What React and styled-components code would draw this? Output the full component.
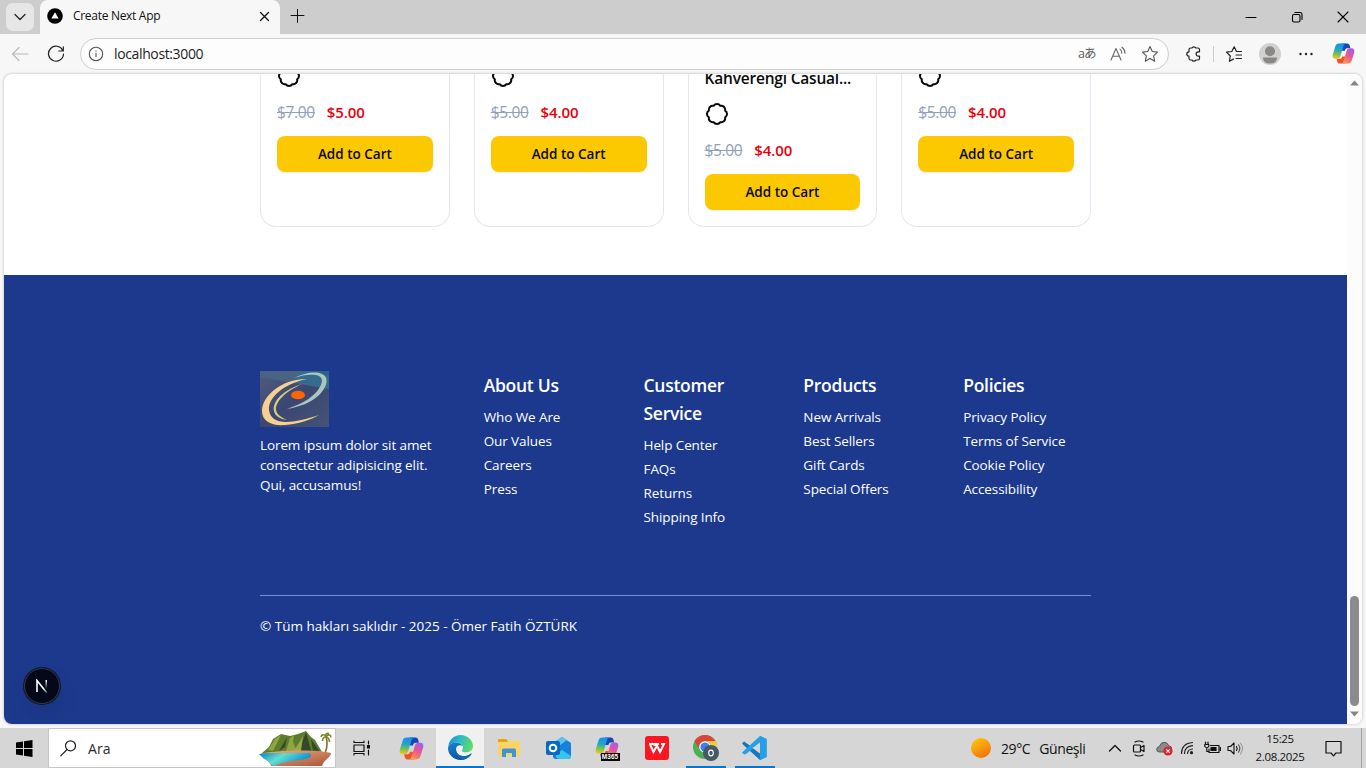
import React from "react";
import styled, { createGlobalStyle } from "styled-components";
import { Badge } from "lucide-react";

const Global = createGlobalStyle`
  * { box-sizing: border-box; }
  body { margin: 0; overflow: hidden; font-family: "Open Sans", "Noto Sans", sans-serif; }
  svg { display: block; flex: none; }
`;

const Screen = styled.div`
  width: 1366px;
  height: 768px;
  display: flex;
  flex-direction: column;
  overflow: hidden;
  background: #f7f7f7;
  color: #111;
`;

/* ---------- Browser chrome ---------- */
const TitleBar = styled.header`
  height: 34px;
  flex: none;
  display: flex;
  background: #cdcdcd;
`;
const TabMenuSlot = styled.div`
  width: 40px;
  display: flex;
  align-items: flex-start;
  padding: 3px 0 0 6px;
`;
const TabMenu = styled.div`
  width: 28px;
  height: 28px;
  border-radius: 7px;
  background: #e6e6e6;
  display: grid;
  place-items: center;
`;
const Tab = styled.div`
  width: 240px;
  display: flex;
  align-items: center;
  padding: 0 9px 2px 7px;
  background: #f7f7f7;
  border-radius: 8px 8px 0 0;
`;
const TabTitle = styled.span`
  flex: 1;
  margin: -1px 0 0 10px;
  font-size: 12px;
  letter-spacing: -0.3px;
  white-space: nowrap;
`;
const NewTab = styled.div`
  margin: 8px 0 0 9px;
`;
const WindowButtons = styled.div`
  margin-left: auto;
  display: flex;
`;
const WindowButton = styled.div`
  width: 46px;
  height: 33px;
  display: grid;
  place-items: center;
`;
const Toolbar = styled.div`
  height: 39px;
  flex: none;
  display: flex;
  align-items: center;
  padding: 0 10px 0 10px;
`;
const NavButton = styled.div`
  width: 20px;
  margin-right: ${(p) => p.$gap}px;
  display: grid;
  place-items: center;
`;
const AddressBar = styled.div`
  width: 1089px;
  height: 32px;
  display: flex;
  align-items: center;
  border: 1px solid #cfcfcf;
  border-radius: 16px;
  background: #fdfdfd;
  padding: 0 9px 0 7px;
`;
const Url = styled.span`
  flex: 1;
  margin-left: 10px;
  font-size: 14px;
  letter-spacing: -0.37px;
  color: #1d1d1d;
`;
const AddressIcons = styled.div`
  display: flex;
  align-items: center;
  gap: 14px;
`;
const Translate = styled.span`
  font-family: "Open Sans", "Noto Sans CJK JP", sans-serif;
  font-size: 12.5px;
  line-height: 18px;
  letter-spacing: -1px;
  color: #5c5c5c;
  width: 17px;
  white-space: nowrap;
`;
const BrowserActions = styled.div`
  flex: 1;
  display: flex;
  align-items: center;
  padding-left: 15px;
`;
const Divider = styled.div`
  width: 1px;
  height: 16px;
  margin: 0 11px;
  background: #cccccc;
`;

/* ---------- Page viewport ---------- */
const Viewport = styled.main`
  height: 650px;
  flex: none;
  margin: 1px 4px 4px;
  display: flex;
  overflow: hidden;
  border-radius: 8px;
  background: #fff;
  box-shadow: 0 0 3px rgba(0, 0, 0, 0.28);
`;
const Page = styled.div`
  width: 1343px;
  height: 650px;
  overflow: hidden;
`;
const Scrollbar = styled.div`
  width: 15px;
  display: flex;
  flex-direction: column;
  align-items: center;
  background: #fcfcfc;
  padding: 6px 0 7px;
`;
const Thumb = styled.div`
  width: 9px;
  height: 110px;
  margin: auto 0 5px;
  border-radius: 5px;
  background: #8b8b8b;
`;
const Products = styled.section`
  height: 201px;
  overflow: hidden;
  padding: 0 256px;
`;
const ProductGrid = styled.div`
  height: 163px;
  margin-top: -10px;
  display: grid;
  grid-template-columns: repeat(4, 1fr);
  gap: 24px;
`;
const Card = styled.article`
  display: flex;
  flex-direction: column;
  align-items: stretch;
  gap: 12px;
  padding: 0 16px 16px;
  border: 1px solid #e2e8f0;
  border-top: 0;
  border-radius: 0 0 16px 16px;
`;
const ProductName = styled.h2`
  margin: 0;
  height: 26px;
  padding-top: 2px;
  font-size: 15.5px;
  line-height: 24px;
  font-weight: 600;
  letter-spacing: -0.2px;
  white-space: nowrap;
  color: #0a0a0a;
`;
const Prices = styled.div`
  height: 24px;
  display: flex;
  gap: 12px;
  font-size: 15.5px;
  line-height: 24px;
  letter-spacing: -0.35px;
`;
const OldPrice = styled.span`
  color: #90a1b9;
  text-decoration: line-through;
`;
const Price = styled.span`
  color: #e7000b;
  font-size: 15px;
  font-weight: 600;
  letter-spacing: -0.1px;
`;
const CartButton = styled.button`
  height: 36px;
  flex: none;
  padding: 0;
  border: 0;
  border-radius: 8px;
  background: #fcc800;
  box-shadow: 0 1px 2px rgba(0, 0, 0, 0.08);
  color: #0a0a0a;
  font: 600 13.5px/36px "Open Sans", sans-serif;
  letter-spacing: 0;
`;
const Footer = styled.footer`
  position: relative;
  height: 449px;
  padding: 96px 256px 0;
  background: #1c398e;
  color: #fff;
`;
const FooterGrid = styled.div`
  height: 224px;
  display: grid;
  grid-template-columns: 1.5fr repeat(4, 1fr);
  column-gap: 32px;
`;
const About = styled.p`
  margin: 8px 0 0;
  font-size: 13.5px;
  line-height: 20px;
  letter-spacing: -0.1px;
  white-space: pre;
`;
const ColumnTitle = styled.h3`
  margin: 0 0 8px;
  font-size: 17.5px;
  line-height: 28px;
  font-weight: 600;
  letter-spacing: -0.28px;
`;
const Links = styled.ul`
  margin: 0;
  padding: 0;
  list-style: none;
  display: flex;
  flex-direction: column;
  gap: 4px;
  font-size: 13.5px;
  line-height: 20px;
  letter-spacing: -0.1px;
  white-space: nowrap;
`;
const Copyright = styled.div`
  border-top: 1px solid #7a90c8;
  padding-top: 20px;
  font-size: 13.5px;
  line-height: 20px;
  letter-spacing: -0.01px;
`;
const DevBadge = styled.div`
  position: absolute;
  left: 20px;
  bottom: 20px;
  width: 36px;
  height: 36px;
  border-radius: 50%;
  background: #040819;
  border: 1px solid #34394a;
  box-shadow: 0 0 0 1px #10172c, 0 12px 22px rgba(0, 0, 0, 0.08);
  display: grid;
  place-items: center;
`;

/* ---------- Taskbar ---------- */
const Taskbar = styled.nav`
  height: 40px;
  flex: none;
  display: flex;
  background: #d6d6d6;
`;
const TaskSlot = styled.div`
  width: ${(p) => p.$w || 49}px;
  height: 40px;
  display: grid;
  place-items: center;
  background: ${(p) => (p.$active ? "#f0f0f0" : "transparent")};
  border-bottom: ${(p) => (p.$active ? "2px solid #0078d7" : "0")};
`;
const RunningSlot = styled(TaskSlot)`
  background: linear-gradient(#0078d7, #0078d7) center bottom / 40px 2px no-repeat;
`;
const SearchBox = styled.div`
  width: 288px;
  height: 40px;
  display: flex;
  align-items: center;
  padding: 0 3px 0 11px;
  background: #fff;
  border: 1px solid #c5c5c5;
`;
const SearchLabel = styled.span`
  flex: 1;
  margin-left: 12px;
  font-size: 14px;
  letter-spacing: 0.1px;
  color: #2b2b2b;
`;
const Tray = styled.div`
  margin-left: auto;
  display: flex;
  align-items: center;
`;
const Sun = styled.div`
  width: 20px;
  height: 20px;
  margin-right: 10px;
  border-radius: 50%;
  background: linear-gradient(150deg, #fdc50b 10%, #f79a0c 50%, #ee6a09 95%);
`;
const Weather = styled.div`
  width: 107px;
  display: flex;
  gap: 9px;
  font-size: 14px;
  letter-spacing: -0.4px;
  white-space: nowrap;
`;
const TrayIcon = styled.div`
  width: ${(p) => p.$w || 24}px;
  display: grid;
  place-items: center;
`;
const Clock = styled.div`
  width: 56px;
  margin-right: 9px;
  text-align: center;
  font-size: 11.5px;
  line-height: 18px;
  letter-spacing: -0.35px;
`;
const ShowDesktop = styled.div`
  width: 5px;
  height: 40px;
  margin-left: 11px;
  border-left: 1px solid #a0a0a0;
`;

/* ---------- Icons ---------- */
const Line = ({ w = 16, h = w, box, color = "#222", sw = 1.1, children }) => (
  <svg width={w} height={h} viewBox={box || `0 0 ${w} ${h}`} fill="none" stroke={color} strokeWidth={sw} strokeLinecap="round" strokeLinejoin="round">
    {children}
  </svg>
);

const CopilotLogo = ({ size = 24, id }) => (
  <svg width={size} height={size} viewBox="0 0 24 24">
    <defs>
      <linearGradient id={`${id}a`} x1="0.3" y1="0" x2="0.2" y2="1">
        <stop offset="0" stopColor="#1c8cf0" />
        <stop offset="0.4" stopColor="#21a9c4" />
        <stop offset="0.7" stopColor="#82c341" />
        <stop offset="1" stopColor="#f4c81c" />
      </linearGradient>
      <linearGradient id={`${id}b`} x1="0.8" y1="0" x2="0.3" y2="1">
        <stop offset="0" stopColor="#a45cf2" />
        <stop offset="0.45" stopColor="#e4559d" />
        <stop offset="0.8" stopColor="#fb7a63" />
        <stop offset="1" stopColor="#f4a24b" />
      </linearGradient>
    </defs>
    <path d="M10 1.500h6c1.300 0 2 .8 2.400 2l.8 3h-2.600c-2 0-2.600.6-3.200 2.500H10z" fill="#1748b5" />
    <path d="M14 22.500H8c-1.300 0-2-.8-2.400-2l-.8-3h2.600c2 0 2.600-.6 3.200-2.500H14z" fill="#f0522d" />
    <path d="M7.500 1.500h7c-1.500.3-2.200 1.500-2.700 3.200l-3 10c-.6 2-1.600 2.900-3.500 2.900H3.600C1 17.600.1 15.400.9 12.700l2.500-8C4 2.600 5.300 1.500 7.500 1.500z" fill={`url(#${id}a)`} />
    <path d="M16.500 22.500h-7c1.500-.3 2.200-1.500 2.700-3.200l3-10c.6-2 1.600-2.900 3.500-2.900h1.700c2.600 0 3.500 2.200 2.700 4.900l-2.500 8c-.6 2.100-1.900 3.200-4.100 3.200z" fill={`url(#${id}b)`} />
  </svg>
);

const SiteLogo = () => (
  <svg width="69" height="56" viewBox="0 0 69 56">
    <defs>
      <linearGradient id="siteBg" x1="0" y1="0" x2="1" y2="1">
        <stop offset="0" stopColor="#4f5d80" />
        <stop offset="0.5" stopColor="#3c4672" />
        <stop offset="1" stopColor="#455475" />
      </linearGradient>
      <linearGradient id="siteRing" x1="0" y1="1" x2="1" y2="0">
        <stop offset="0.3" stopColor="#f7cf91" />
        <stop offset="0.75" stopColor="#a9c7bd" />
      </linearGradient>
    </defs>
    <rect width="69" height="56" fill="url(#siteBg)" />
    <path d="M0 0H48L69 5V18L0 6z" fill="#4b6382" />
    <path d="M42 0H69V18L32 11z" fill="#277296" opacity=".6" />
    <path d="M47 8C20 8 2 26 2 40c0 10 9 15 23 14 13-1 26-5 34-10-12 4-24 7-33 7C16 51 10 47 9 39 8 27 23 13 47 8z" fill="#f7cf91" />
    <path d="M45 12C24 18 12 30 14 40c1 5 6 8 13 9-6-3-10-5-11-10-1-8 10-20 29-27z" fill="#d8ce82" />
    <path d="M34 7C44 2 55 0 62 3c8 3 5 14-4 22-8 7-19 11-31 13 14-5 24-10 31-19 6-8 5-14-2-15-6-1-14 0-22 3z" fill="#a9c7bd" />
    <ellipse cx="38" cy="24" rx="7" ry="4.300" fill="#fd6504" />
  </svg>
);

const Island = () => (
  <svg width="73" height="35" viewBox="0 0 73 35">
    <defs>
      <linearGradient id="lagoon" x1="0" y1="0" x2="1" y2="0.4">
        <stop offset="0" stopColor="#087bc8" />
        <stop offset="0.45" stopColor="#5fe0d0" />
        <stop offset="1" stopColor="#0b8ad4" />
      </linearGradient>
      <linearGradient id="sand" x1="0" y1="0" x2="1" y2="1">
        <stop offset="0" stopColor="#f2b47c" />
        <stop offset="1" stopColor="#a9503b" />
      </linearGradient>
    </defs>
    <path d="M3 22L10 16 14 8 22 3 31 5 39 3 47 0 52 6 56 9 63 21 60 24H4z" fill="#5d7d2c" />
    <path d="M9 19L16 8 22 4 18 12 14 20zM27 20L31 7 35 4 34 11 38 20z" fill="#8ea63f" />
    <path d="M40 20L47 1 50 12 52 20zM20 20L28 6 26 16zM54 20L52 8 61 21z" fill="#34492b" />
    <path d="M35 20L44 5 42 20z" fill="#98aa47" />
    <path d="M1 23C14 19 60 18 72 22 72 27 65 28 63 35H12C11 30 4 28 1 23z" fill="url(#sand)" />
    <path d="M0 23C12 21 24 23 31 22H50C55 25 50 28 41 29 30 30 22 32 15 35 10 33 11 30 5 28z" fill="url(#lagoon)" />
    <path d="M66.500 21C68.500 15 68.500 10 67 6" stroke="#8a6738" strokeWidth="1.600" fill="none" />
    <path d="M67 5.500C64 2.500 62.500 4 62 6M67 5.500C70 2.500 72 4 72 6.500M67 5.500C64.500 6 63.500 8 63.500 10M67 5.500C70 7 70.500 9 70.500 11M67 5.500C65.500 3 68 2 70 2.500" stroke="#788b25" strokeWidth="1.600" fill="none" />
  </svg>
);

const EdgeLogo = () => (
  <svg width="25" height="25" viewBox="0 0 24 24">
    <defs>
      <linearGradient id="edgeTop" x1="0" y1="0.3" x2="1" y2="0.5">
        <stop offset="0" stopColor="#1694d8" />
        <stop offset="0.5" stopColor="#30bfc2" />
        <stop offset="1" stopColor="#62dd5c" />
      </linearGradient>
      <linearGradient id="edgeLow" x1="0" y1="0" x2="0.6" y2="1">
        <stop offset="0" stopColor="#1785d8" />
        <stop offset="1" stopColor="#0c4c94" />
      </linearGradient>
    </defs>
    <path d="M.2 11C.9 4.800 5.800 0 12 0c6.800 0 12 5.300 12 10.600 0 4-3 6-6.300 6-3 0-4.400-1-4.300-1.800.1-.5 1-1 1-2.600C14.400 9.600 12 7.300 8.500 7.300 4.500 7.300 1.300 9 .2 11z" fill="url(#edgeTop)" />
    <path d="M.1 12c.4-3 4-4.900 7.600-4.900 3 0 5.500 1.400 6.300 3.400-1-.8-3-1.200-4.600-.1-3.200 2.200-1.700 8.200 3.200 9.600 3.500 1 6.800.1 9.300-2 .4-.3.800 0 .5.400C20 21.900 16.200 24 12 24 5.200 24-.6 18.500.1 12z" fill="url(#edgeLow)" />
    <path d="M7.500 12.500c-2 5 2.200 10.200 7.500 11.100 3-.7 5.600-2.500 7.400-5.200.3-.4-.1-.7-.5-.4-2.500 2.100-5.800 3-9.300 2-3.500-1-5.300-4.500-5.100-7.500z" fill="#1269b5" />
  </svg>
);

const Explorer = () => (
  <svg width="22" height="20" viewBox="0 0 22 20">
    <path d="M0 1h8l2 2h12v5H0z" fill="#e5a50f" />
    <path d="M0 4h9l1-1h12v15H0z" fill="#fbd462" />
    <path d="M4 19v-7q0-1.500 1.500-1.500h11q1.500 0 1.500 1.500v7h-4v-4H8v4z" fill="#3c94db" />
  </svg>
);

const Outlook = () => (
  <svg width="25" height="24" viewBox="0 0 25 24">
    <path d="M7 7L16 1 25 7V20Q25 23 22 23H10Q7 23 7 20z" fill="#1780d8" />
    <path d="M10 5L16 1 21 4 13 10z" fill="#59c4f4" />
    <path d="M25 8L10 18V21Q11 23 14 23H22Q25 23 25 20z" fill="#35c5ef" />
    <path d="M25 8L16 14 25 20z" fill="#1780d8" />
    <rect x="0" y="5" width="14" height="14" rx="2" fill="#0869c3" />
    <circle cx="7" cy="12" r="3.300" fill="none" stroke="#fff" strokeWidth="2" />
  </svg>
);

const M365Stack = styled.div`
  position: relative;
  width: 26px;
  height: 25px;
`;
const M365Label = styled.span`
  position: absolute;
  right: 1px;
  bottom: 0;
  width: 19px;
  height: 8px;
  background: #080808;
  color: #fff;
  font: 700 6.5px/8px "Liberation Sans", sans-serif;
  text-align: center;
`;
const M365 = () => (
  <M365Stack>
    <CopilotLogo size={24} id="m" />
    <M365Label>M365</M365Label>
  </M365Stack>
);

const Wps = () => (
  <svg width="24" height="24" viewBox="0 0 24 24">
    <rect width="24" height="24" rx="3" fill="#fc1622" />
    <path d="M4 8H14M4.800 8L8.500 16 12 9.500M8.500 8.500L12 9.500 15 16 19 8H16" fill="none" stroke="#fff" strokeWidth="2" />
  </svg>
);

const Chrome = () => (
  <svg width="26" height="26" viewBox="0 0 26 26">
    <circle cx="12" cy="12" r="12" fill="#4caf50" />
    <path d="M1.600 6A12 12 0 0 1 22.400 6H12a6 6 0 0 0-5.500 8.500z" fill="#db4437" />
    <path d="M22.400 6A12 12 0 0 1 12 24l5.200-9A6 6 0 0 0 12 6z" fill="#fdca2f" />
    <circle cx="12" cy="12" r="5.800" fill="#fff" />
    <circle cx="12" cy="12" r="4.600" fill="#3c7ff0" />
    <circle cx="18" cy="18" r="8" fill="#455a64" />
    <ellipse cx="18" cy="18" rx="2.300" ry="2.900" fill="none" stroke="#fff" strokeWidth="1.100" />
  </svg>
);

const VsCode = () => (
  <svg width="25" height="24" viewBox="0 0 25 24">
    <path d="M18 0L24.500 3V21L18 24 2 9.500 0 7.500 2 5.500 5 7.500 18 17z" fill="#1279bd" />
    <path d="M18 0L24.500 3V21L18 24V7L4 18 2 18.500 0 16.500z" fill="#269fe6" />
    <path d="M18 6.500V17.500L10.500 12z" fill="#d6d6d6" />
  </svg>
);

const Speaker = () => (
  <Line w={17} h={15} color="#111">
    <path d="M1 5.500h2.500L7 2v11L3.500 9.500H1z" />
    <path d="M9.500 5.500q1.300 2 0 4" />
    <path d="M11.500 3.800q2.500 3.700 0 7.400" stroke="#555" />
    <path d="M13.500 2q4 5.500 0 11" stroke="#999" />
  </Line>
);

const columns = [
  { title: "About Us", links: ["Who We Are", "Our Values", "Careers", "Press"] },
  { title: "Customer Service", links: ["Help Center", "FAQs", "Returns", "Shipping Info"] },
  { title: "Products", links: ["New Arrivals", "Best Sellers", "Gift Cards", "Special Offers"] },
  { title: "Policies", links: ["Privacy Policy", "Terms of Service", "Cookie Policy", "Accessibility"] },
];
const products = [
  { old: "$7.00", price: "$5.00" },
  { old: "$5.00", price: "$4.00" },
  { name: "Kahverengi Casual...", old: "$5.00", price: "$4.00" },
  { old: "$5.00", price: "$4.00" },
];

const Avatar = styled.svg`
  margin-left: 16px;
`;
const MoreDots = styled.svg`
  margin: 0 19px 0 18px;
`;

function BrowserChrome() {
  return (
    <>
      <TitleBar>
        <TabMenuSlot>
          <TabMenu>
            <Line w={12} h={8} sw={1.2}><path d="M1 1.500l5 5 5-5" /></Line>
          </TabMenu>
        </TabMenuSlot>
        <Tab>
          <svg width="16" height="16" viewBox="0 0 16 16">
            <circle cx="8" cy="8" r="7.800" fill="#000" />
            <path d="M8 4.200L11.600 10.500H4.400z" fill="#fff" />
          </svg>
          <TabTitle>Create Next App</TabTitle>
          <Line w={13} sw={1.3} color="#111"><path d="M2.500 2.500l8 8M10.500 2.500l-8 8" /></Line>
        </Tab>
        <NewTab>
          <Line w={16} color="#111" sw={1}><path d="M8.500 1.500v13M2 7.500h13" /></Line>
        </NewTab>
        <WindowButtons>
          <WindowButton><Line w={12} color="#000" sw={1}><path d="M1 6.500h10" /></Line></WindowButton>
          <WindowButton>
            <Line w={12} color="#000" sw={1.1}>
              <rect x="1.500" y="3.500" width="7.500" height="7.500" rx="1.500" />
              <path d="M3.800 1.500H9q2 0 2 2v5" />
            </Line>
          </WindowButton>
          <WindowButton><Line w={12} color="#000" sw={1.1}><path d="M1 1l10 10M11 1L1 11" /></Line></WindowButton>
        </WindowButtons>
      </TitleBar>
      <Toolbar>
        <NavButton $gap={16}>
          <Line w={18} h={16} color="#b8b8b8" sw={1.1}><path d="M8 1.500L1.500 8 8 14.500M2 8h15" /></Line>
        </NavButton>
        <NavButton $gap={14}>
          <Line w={18} color="#222" sw={1.2}>
            <path d="M15.800 5.500A7.500 7.500 0 1 0 16.500 9M16.300 1.800v4.200h-4.500" />
          </Line>
        </NavButton>
        <AddressBar>
          <Line w={16} color="#555" sw={1.1}>
            <circle cx="8" cy="8" r="6.700" />
            <path d="M8 7.300v3.500M8 5v.2" />
          </Line>
          <Url>localhost:3000</Url>
          <AddressIcons>
            <Translate>aあ</Translate>
            <Line w={18} h={18} color="#666" sw={1.1}>
              <path d="M2 15L7 3.500 12 15M3.800 11.200h6.400M11 4.200q1.800 1.500 1.800 4M13 2.200q3 2.400 3 6" />
            </Line>
            <Line w={18} color="#555" sw={1.1}>
              <path d="M9 1.500l2.300 5 5.200.6-3.900 3.700 1.100 5.500L9 13.600l-4.700 2.700 1.100-5.500L1.500 7.100l5.200-.6z" />
            </Line>
          </AddressIcons>
        </AddressBar>
        <BrowserActions>
          <Line w={18} color="#222" sw={1.2}>
            <path d="M5 4.500q0-1.500 1.500-1.500H8a2 1.700 0 0 1 3.800 0H14q1.500 0 1.500 1.500v2.300h-1.200a2.200 2.200 0 1 0 0 4.400h1.200v2.300q0 1.500-1.500 1.500H11.800a2 1.700 0 0 1-3.800 0H6.500Q5 15 5 13.500V11.200a2.200 2.200 0 0 1 0-4.400z" />
          </Line>
          <Divider />
          <Line w={18} color="#222" sw={1.2}>
            <path d="M16.500 6.500h-5L9.200 1.800 6.800 6.500l-5.300.7L5.300 11l-.9 5.300 4-2.200M11 10h5.500M11 13.500h5.500" />
          </Line>
          <Avatar width="22" height="22" viewBox="0 0 22 22">
            <circle cx="11" cy="11" r="11" fill="#d2d0ce" />
            <circle cx="11" cy="8.300" r="5" fill="#8a8886" />
            <path d="M4 14.500h14q0 6-7 6t-7-6z" fill="#8a8886" />
          </Avatar>
          <MoreDots width="14" height="4" viewBox="0 0 14 4" fill="#222">
            <circle cx="1.500" cy="2" r="1.200" /><circle cx="7" cy="2" r="1.200" /><circle cx="12.500" cy="2" r="1.200" />
          </MoreDots>
          <CopilotLogo size={23} id="t" />
        </BrowserActions>
      </Toolbar>
    </>
  );
}

export default function App() {
  return (
    <Screen>
      <Global />
      <BrowserChrome />
      <Viewport>
        <Page>
          <Products>
            <ProductGrid>
              {products.map((p, i) => (
                <Card key={i}>
                  {p.name && <ProductName>{p.name}</ProductName>}
                  <Badge size={24} color="#0a0a0a" />
                  <Prices><OldPrice>{p.old}</OldPrice><Price>{p.price}</Price></Prices>
                  <CartButton>Add to Cart</CartButton>
                </Card>
              ))}
            </ProductGrid>
          </Products>
          <Footer>
            <FooterGrid>
              <div>
                <SiteLogo />
                <About>{"Lorem ipsum dolor sit amet\nconsectetur adipisicing elit.\nQui, accusamus!"}</About>
              </div>
              {columns.map((c) => (
                <div key={c.title}>
                  <ColumnTitle>{c.title}</ColumnTitle>
                  <Links>{c.links.map((l) => <li key={l}>{l}</li>)}</Links>
                </div>
              ))}
            </FooterGrid>
            <Copyright>© Tüm hakları saklıdır - 2025 - Ömer Fatih ÖZTÜRK</Copyright>
            <DevBadge>
              <svg width="14" height="14" viewBox="0 0 14 14" fill="none" strokeWidth="1.600">
                <defs>
                  <linearGradient id="nStem" x1="0" y1="0" x2="0" y2="1">
                    <stop offset="0" stopColor="#fff" /><stop offset="1" stopColor="#fff" stopOpacity="0" />
                  </linearGradient>
                  <linearGradient id="nLeg" x1="0" y1="0" x2="1" y2="1">
                    <stop offset="0.65" stopColor="#fff" /><stop offset="1" stopColor="#fff" stopOpacity="0.2" />
                  </linearGradient>
                </defs>
                <path d="M2 13V1.500L12 14" stroke="url(#nLeg)" />
                <rect x="10.500" y="1" width="1.500" height="9" fill="url(#nStem)" />
              </svg>
            </DevBadge>
          </Footer>
        </Page>
        <Scrollbar>
          <svg width="9" height="6" viewBox="0 0 9 6"><path d="M0 5.500L4.500.5 9 5.500z" fill="#858585" /></svg>
          <Thumb />
          <svg width="9" height="6" viewBox="0 0 9 6"><path d="M0 .5h9L4.500 5.500z" fill="#858585" /></svg>
        </Scrollbar>
      </Viewport>
      <Taskbar>
        <TaskSlot $w={48}>
          <svg width="17" height="17" viewBox="0 0 17 17" fill="#000">
            <path d="M0 2.400L7 1.400V8H0zM8 1.200L16.500 0V8H8zM0 9h7v6.600L0 14.600zM8 9h8.500v8L8 15.800z" />
          </svg>
        </TaskSlot>
        <SearchBox>
          <Line w={16} h={17} color="#222" sw={1.2}><circle cx="10.500" cy="5.800" r="5" /><path d="M7 9.500L.8 15.800" /></Line>
          <SearchLabel>Ara</SearchLabel>
          <Island />
        </SearchBox>
        <TaskSlot $w={50}>
          <Line w={17} h={16} color="#111" sw={1.2}>
            <rect x="1" y="5" width="10" height="6.500" />
            <path d="M1 1v1.500h10V1M1 15v-1.500h10V15M15.500 1v3M15.500 10v5" />
            <rect x="14.500" y="5.500" width="2" height="2.500" fill="#111" />
          </Line>
        </TaskSlot>
        <TaskSlot $w={50}><CopilotLogo size={25} id="b" /></TaskSlot>
        <TaskSlot $active $w={48}><EdgeLogo /></TaskSlot>
        <TaskSlot $w={50}><Explorer /></TaskSlot>
        <TaskSlot><Outlook /></TaskSlot>
        <TaskSlot><M365 /></TaskSlot>
        <TaskSlot><Wps /></TaskSlot>
        <RunningSlot><Chrome /></RunningSlot>
        <RunningSlot><VsCode /></RunningSlot>
        <Tray>
          <Sun />
          <Weather><span>29°C</span><span>Güneşli</span></Weather>
          <TrayIcon $w={14}><Line w={14} h={8} color="#111" sw={1.3}><path d="M1.500 7L7 1.500 12.500 7" /></Line></TrayIcon>
          <TrayIcon $w={34}>
            <Line w={14} h={17} color="#111" sw={1.2}>
              <rect x="1.500" y="5" width="7" height="7" rx="1" /><path d="M8.500 7.500L12 5.500v6L8.500 9.500M3 2q4-2 8 0M3 15q4 2 8 0" />
            </Line>
          </TrayIcon>
          <TrayIcon $w={14}>
            <svg width="17" height="15" viewBox="0 0 17 15">
              <path d="M3.500 11Q.5 11 .8 8q.3-2.200 2.500-2.400Q5 1 8.500 1.300q3 .2 4.200 3.400 3 .3 3 3.300T12 11z" fill="#8b8b8b" stroke="#555" />
              <circle cx="12" cy="10" r="4.600" fill="#dc2430" />
              <path d="M10.400 8.400l3.200 3.200M13.600 8.400l-3.200 3.200" stroke="#fff" strokeWidth="1.200" />
            </svg>
          </TrayIcon>
          <TrayIcon $w={34}>
            <Line w={14} h={14} color="#222" sw={1.2}>
              <path d="M1.500 12.500Q1.500 2.500 12.500 1.500M4.500 12.500Q4.800 5.300 12.500 4.700M7.500 12.500Q7.800 8.300 12.500 8" />
              <circle cx="11.500" cy="11.700" r="1" fill="#222" />
            </Line>
          </TrayIcon>
          <TrayIcon $w={14}>
            <Line w={17} h={14} color="#111" sw={1.2}>
              <path d="M6.500 4.500H15v7H5V8M16.500 6.500v3M1.500 1v2.500M4 1v2.500M.8 3.500h4v2q-2 2.500-4 0zM2.800 7v3.500H5" />
              <rect x="7" y="6.500" width="5" height="3" fill="#111" />
            </Line>
          </TrayIcon>
          <TrayIcon $w={34}><Speaker /></TrayIcon>
          <Clock>15:25<br />2.08.2025</Clock>
          <TrayIcon $w={33}>
            <Line w={17} h={17} color="#111" sw={1.2}>
              <path d="M1 1.500h15v11.500h-5L8.500 15.800 6 13H1z" />
            </Line>
          </TrayIcon>
          <ShowDesktop />
        </Tray>
      </Taskbar>
    </Screen>
  );
}
